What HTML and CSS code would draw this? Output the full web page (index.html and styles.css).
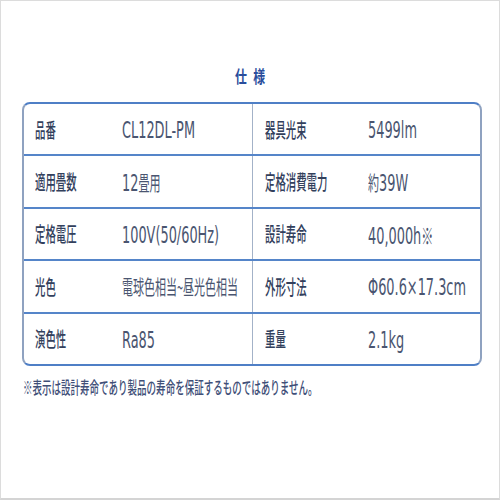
FILE: index.html
```html
<!DOCTYPE html>
<html lang="ja">
<head>
<meta charset="utf-8">
<title>仕様</title>
<link rel="stylesheet" href="styles.css">
</head>
<body>
<div class="frame">
  <h1 class="title"><span class="sx">仕様</span></h1>
  <div class="spec">
    <div class="row">
      <div class="k"><span class="sx">品番</span></div>
      <div class="v"><span class="sx"><span class="lt">CL12DL-PM</span></span></div>
      <div class="k kr"><span class="sx">器具光束</span></div>
      <div class="v"><span class="sx"><span class="lt">5499lm</span></span></div>
    </div>
    <div class="row">
      <div class="k"><span class="sx">適用畳数</span></div>
      <div class="v"><span class="sx"><span class="lt">12</span>畳用</span></div>
      <div class="k kr"><span class="sx">定格消費電力</span></div>
      <div class="v"><span class="sx">約<span class="lt">39W</span></span></div>
    </div>
    <div class="row">
      <div class="k"><span class="sx">定格電圧</span></div>
      <div class="v"><span class="sx"><span class="lt">100V(50/60Hz)</span></span></div>
      <div class="k kr"><span class="sx">設計寿命</span></div>
      <div class="v"><span class="sx"><span class="lt">40,000h</span><span class="mark">※</span></span></div>
    </div>
    <div class="row">
      <div class="k"><span class="sx">光色</span></div>
      <div class="v"><span class="sx">電球色相当~昼光色相当</span></div>
      <div class="k kr"><span class="sx">外形寸法</span></div>
      <div class="v"><span class="sx"><span class="lt">Φ60.6×17.3cm</span></span></div>
    </div>
    <div class="row">
      <div class="k"><span class="sx">演色性</span></div>
      <div class="v"><span class="sx"><span class="lt">Ra85</span></span></div>
      <div class="k kr"><span class="sx">重量</span></div>
      <div class="v"><span class="sx"><span class="lt">2.1kg</span></span></div>
    </div>
  </div>
  <p class="note"><span class="sx">※表示は設計寿命であり製品の寿命を保証するものではありません。</span></p>
</div>
</body>
</html>
```
FILE: styles.css
```css
html, body {
  margin: 0;
  padding: 0;
  background: #ffffff;
}
.frame {
  box-sizing: border-box;
  width: 500px;
  height: 500px;
  border: 1px solid #dcdcdc;
  border-bottom: 2px solid #d4d4d4;
  padding: 65px 21px 0 21px;
  display: flex;
  flex-direction: column;
  font-family: "Noto Sans CJK JP", sans-serif;
}
.sx {
  display: inline-block;
  white-space: nowrap;
  transform-origin: 50% 50%;
}
.title {
  margin: 0;
  height: 20px;
  line-height: 20px;
  font-size: 11.9px;
  font-weight: 700;
  color: #2a4d9c;
  text-align: center;
}
.title .sx {
  transform: scaleY(1.43);
  letter-spacing: 6.3px;
  margin-left: 6.3px;
}
.spec {
  margin-top: 16px;
  width: 456px;
  border: 2px solid #4f7fc6;
  border-left-color: #8fa2c0;
  border-right-color: #8fa2c0;
  border-radius: 8px;
  display: flex;
  flex-direction: column;
}
.row {
  display: grid;
  grid-template-columns: 98px 130px 116px 108px;
  height: 50.4px;
  border-bottom: 2px solid #5585c9;
}
.row:last-child {
  border-bottom: none;
}
.k, .v {
  display: flex;
  align-items: center;
}
.k {
  padding-left: 11px;
  font-size: 10.4px;
  font-weight: 500;
  color: #32405c;
}
.k .sx {
  transform: scaleY(1.92);
}
.kr {
  border-left: 1px solid #a3b2c8;
  padding-left: 12px;
}
.v {
  font-size: 11px;
  color: #4a5570;
}
.v .sx {
  transform: scaleY(1.82);
}
.lt {
  font-family: "DejaVu Sans", "Noto Sans CJK JP", sans-serif;
  font-size: 12.9px;
}
.mark {
  font-size: 12.1px;
  font-weight: 500;
}
.note {
  margin: 10px 0 0 1px;
  height: 22px;
  line-height: 22px;
  font-size: 9.52px;
  font-weight: 500;
  color: #3f4f78;
}
.note .sx {
  transform: scaleY(1.79);
}
```
